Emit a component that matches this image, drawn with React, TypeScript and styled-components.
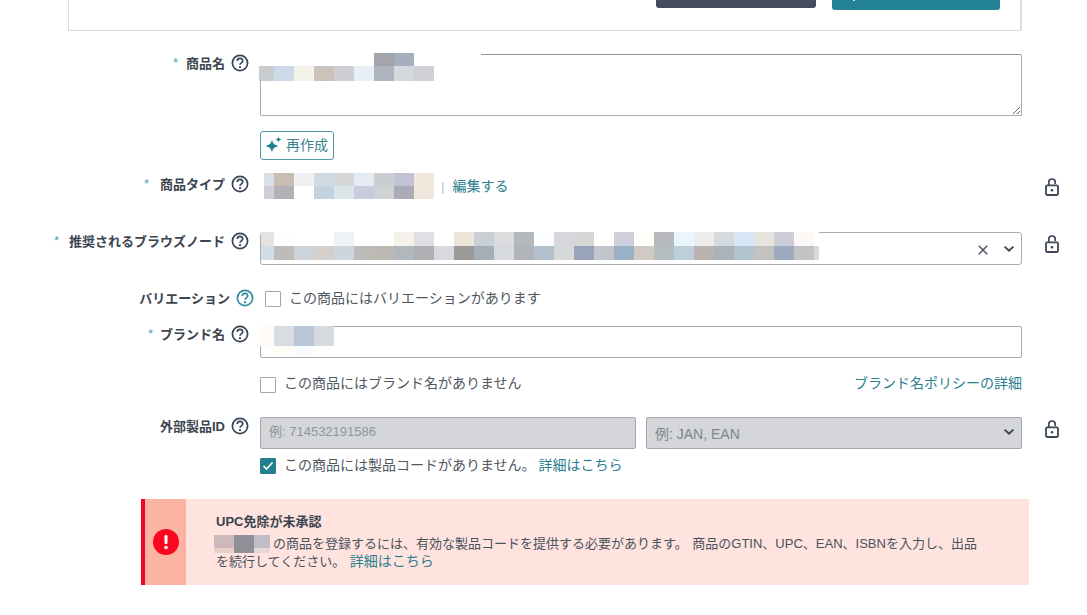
import React from "react";
import styled, { createGlobalStyle } from "styled-components";

const Global = createGlobalStyle`
  html, body { margin: 0; padding: 0; background: #fff; }
  body { font-family: "Liberation Sans", "Noto Sans CJK JP", sans-serif; color: #4a525c; }
`;

const Page = styled.div`
  width: 1087px;
  height: 615px;
  overflow: hidden;
`;

const TopCard = styled.div`
  margin-left: 68px;
  width: 954px;
  height: 31px;
  box-sizing: border-box;
  border: 1px solid #dcdddf;
  border-top: none;
  border-right-width: 2px;
  padding-right: 20px;
  display: flex;
  justify-content: flex-end;
  align-items: flex-start;
  gap: 16px;
`;

const TopButton = styled.div<{ $bg: string; $w: number; $h: number }>`
  width: ${(p) => p.$w}px;
  height: ${(p) => p.$h}px;
  background: ${(p) => p.$bg};
  border-radius: 0 0 3px 3px;
  overflow: hidden;
`;

const ButtonGlyph = styled.span`
  display: block;
  width: 2px;
  height: 1px;
  margin-left: 21px;
  background: #d5e6ea;
`;

const Row = styled.div<{ $mt: number; $shift?: number }>`
  display: grid;
  grid-template-columns: ${(p) => 260 + (p.$shift ?? 0)}px ${(p) => 762 - (p.$shift ?? 0)}px 65px;
  margin-top: ${(p) => p.$mt}px;
`;

const LabelCell = styled.div<{ $top?: number }>`
  display: flex;
  justify-content: flex-end;
  align-items: center;
  height: 18px;
  margin-top: ${(p) => p.$top ?? 0}px;
  padding-right: 11px;
`;

const Asterisk = styled.span<{ $gap: number }>`
  color: #3fa6b6;
  font-size: 13px;
  font-weight: 400;
  margin-right: ${(p) => p.$gap}px;
  margin-top: -2px;
`;

const LabelText = styled.span`
  font-size: 13px;
  line-height: 18px;
  font-weight: 700;
  color: #3b444f;
  margin: 2px 6px 0 0;
  white-space: nowrap;
`;

const Field = styled.div`
  position: relative;
`;

const Mosaic = styled.svg<{ $left?: number; $top?: number }>`
  display: block;
  shape-rendering: crispEdges;
  ${(p) =>
    p.$left !== undefined
      ? `position: absolute; left: ${p.$left}px; top: ${p.$top}px;`
      : ""}
`;

const InlineMosaic = styled.svg`
  display: inline-block;
  shape-rendering: crispEdges;
  vertical-align: -5px;
  margin-left: -2px;
  margin-right: 3px;
`;

const TitleArea = styled.textarea`
  display: block;
  width: 100%;
  height: 62px;
  box-sizing: border-box;
  border: 1px solid #a9adb2;
  border-top-color: #8a949c;
  border-radius: 2px;
  background: #fff;
  margin: 0;
  padding: 0;
  outline: none;
`;

const Regen = styled.button`
  margin: 15px 0 0 0;
  width: 74px;
  height: 29px;
  box-sizing: border-box;
  display: flex;
  align-items: center;
  gap: 2px;
  padding: 0 0 2px 3px;
  background: #fff;
  border: 1px solid #4f98a8;
  border-radius: 3px;
  color: #3b8592;
  font-family: inherit;
  font-size: 14px;
  line-height: 18px;
`;

const TypeLine = styled.div`
  display: flex;
  align-items: center;
  height: 26px;
  padding-left: 4px;
  font-size: 14px;
`;

const Sep = styled.span`
  color: #b6c2d2;
  font-size: 13px;
  margin: 0 8px 0 7px;
`;

const Link = styled.a`
  color: #2b8090;
  font-size: 14px;
  line-height: 20px;
  text-decoration: none;
  white-space: nowrap;
`;

const TightLink = styled(Link)`
  margin-left: -5px;
`;

const AlertLink = styled.a`
  color: #2b8090;
  font-size: 14px;
  line-height: 17px;
  text-decoration: none;
`;

const Combo = styled.div`
  height: 33px;
  box-sizing: border-box;
  border: 1px solid #a9adb2;
  border-radius: 3px;
  background: #fff;
  display: flex;
  align-items: center;
  justify-content: flex-end;
  gap: 14px;
  padding: 2px 6px 0 0;
`;

const CheckRow = styled.div`
  display: flex;
  align-items: center;
  gap: 8px;
  height: 20px;
  font-size: 14px;
  line-height: 20px;
  color: #4f5761;
  white-space: nowrap;
`;

const Box = styled.span<{ $checked?: boolean; $y?: number }>`
  width: 16px;
  height: 16px;
  box-sizing: border-box;
  border: 1px solid ${(p) => (p.$checked ? "#24808f" : "#a3a7ad")};
  border-radius: 1px;
  background: ${(p) => (p.$checked ? "#24808f" : "#fff")};
  display: flex;
  align-items: center;
  justify-content: center;
  position: relative;
  top: ${(p) => p.$y ?? 2}px;
`;

const BrandInput = styled.input`
  display: block;
  width: 100%;
  height: 32px;
  box-sizing: border-box;
  border: 1px solid #a9adb2;
  border-radius: 2px;
  background: #fff;
  margin: 0;
  padding: 0;
  outline: none;
`;

const SplitLine = styled.div`
  display: flex;
  justify-content: space-between;
  align-items: center;
  height: 20px;
`;

const IdFields = styled.div`
  display: grid;
  grid-template-columns: 376px 376px;
  gap: 10px;
`;

const DisabledInput = styled.input`
  display: block;
  width: 100%;
  height: 32px;
  box-sizing: border-box;
  border: 1px solid #a3a7ac;
  border-radius: 2px;
  background: #d4d6d9;
  margin: 0;
  padding: 0 8px 3px;
  outline: none;
  font-family: "Liberation Sans", "Noto Sans CJK JP", sans-serif;
  font-size: 13px;
  &::placeholder { color: #90969c; opacity: 1; }
`;

const DisabledSelect = styled.div`
  height: 32px;
  box-sizing: border-box;
  border: 1px solid #a3a7ac;
  border-radius: 2px;
  background: #d4d6d9;
  display: flex;
  align-items: center;
  justify-content: space-between;
  padding: 0 6px 1px 8px;
  font-family: "Liberation Sans", "Noto Sans CJK JP", sans-serif;
  font-size: 14px;
  color: #7e858c;
`;

const LockSlot = styled.div<{ $top: number }>`
  padding-left: 23px;
  margin-top: ${(p) => p.$top}px;
`;

const Alert = styled.div`
  margin: 24px 0 0 141px;
  width: 888px;
  height: 86px;
  display: flex;
  background: #fee3de;
  border-left: 4px solid #f5052b;
  box-sizing: border-box;
`;

const AlertSide = styled.div`
  width: 41px;
  background: #fbb4a2;
  display: flex;
  align-items: center;
  justify-content: center;
  flex: none;
`;

const AlertBody = styled.div`
  padding: 13px 0 0 30px;
`;

const AlertTitle = styled.div`
  font-size: 13px;
  line-height: 20px;
  font-weight: 700;
  color: #3b444f;
`;

const AlertText = styled.div`
  font-size: 13px;
  line-height: 17px;
  margin-top: 3px;
  color: #4a525c;
  white-space: nowrap;
  word-spacing: 1px;
`;

type Cell = [number, string];

function MosaicRows({ rows, width, height, left, top }: { rows: { y: number; h: number; cells: Cell[]; x?: number }[]; width: number; height: number; left?: number; top?: number }) {
  return (
    <Mosaic width={width} height={height} $left={left} $top={top} aria-hidden>
      {rows.map((r, i) => {
        let x = r.x ?? 0;
        return r.cells.map(([w, c], j) => {
          const el = <rect key={`${i}-${j}`} x={x} y={r.y} width={w} height={r.h} fill={c} />;
          x += w;
          return el;
        });
      })}
    </Mosaic>
  );
}

const uniform = (first: number, colors: string[], last?: number): Cell[] =>
  colors.map((c, i) => [i === 0 ? first : i === colors.length - 1 && last ? last : 20, c]);

function Help({ teal }: { teal?: boolean }) {
  const c = teal ? "#2f8ea0" : "#3a4556";
  return (
    <svg width="18" height="18" viewBox="0 0 18 18" fill="none" style={{ flex: "none" }}>
      <circle cx="9" cy="9" r="7.6" stroke={c} strokeWidth="1.7" />
      <path d="M6.3 7a2.7 2.7 0 0 1 5.4.1c0 1.7-2.7 1.8-2.7 3.6" stroke={c} strokeWidth="1.7" />
      <circle cx="9" cy="13.2" r="1.1" fill={c} />
    </svg>
  );
}

function Lock() {
  return (
    <svg width="14" height="18" viewBox="0 0 14 18" fill="none" style={{ display: "block" }}>
      <path d="M3.8 8V4.2a3.2 3.2 0 0 1 6.4 0V6" stroke="#3d4758" strokeWidth="1.7" />
      <rect x="1" y="7.4" width="12" height="9.6" rx="1.2" stroke="#3d4758" strokeWidth="1.8" />
      <circle cx="7" cy="12.2" r="1.3" fill="#3d4758" />
    </svg>
  );
}

function Chevron() {
  return (
    <svg width="12" height="8" viewBox="0 0 12 8" fill="none" style={{ flex: "none", marginBottom: 1 }}>
      <path d="M1.6 1.6 6 5.8l4.4-4.2" stroke="#3d4758" strokeWidth="1.9" />
    </svg>
  );
}

const Req = ({ gap }: { gap: number }) => <Asterisk $gap={gap}>*</Asterisk>;

export default function App() {
  return (
    <Page>
      <Global />
      <TopCard>
        <TopButton $bg="#434c5c" $w={160} $h={8} />
        <TopButton $bg="#248296" $w={168} $h={10}>
          <ButtonGlyph />
        </TopButton>
      </TopCard>

      <Row $mt={23}>
        <LabelCell>
          <Req gap={8} />
          <LabelText>商品名</LabelText>
          <Help />
        </LabelCell>
        <Field>
          <TitleArea readOnly />
          <MosaicRows
            left={-1}
            top={-1}
            width={222}
            height={28}
            rows={[
              { y: 0, h: 13, cells: [[115, "#fff"], [20, "#a3a5ad"], [20, "#a5afbd"], [67, "#fff"]] },
              { y: 13, h: 15, cells: [[15, "#c9cdcf"], [20, "#cddaea"], [20, "#f3f3ec"], [20, "#cbc3b9"], [20, "#d0ced2"], [20, "#e6eef6"], [20, "#aeb5c0"], [20, "#d5d8dc"], [20, "#cfd0d4"], [47, "#fffffd"]] },
            ]}
          />
          <Regen>
            <svg width="20" height="20" viewBox="0 0 20 20">
              <path d="M8 4.5c.7 3.8 2.2 5.3 6.5 6.5-4.3 1.2-5.8 2.7-6.5 6.5-.7-3.8-2.2-5.3-6.5-6.5 4.3-1.2 5.8-2.7 6.5-6.5Z" fill="#1f7f8e" />
              <path d="M14.5 1.5c.4 1.9 1 2.5 3 3-2 .5-2.6 1.1-3 3-.4-1.9-1-2.5-3-3 2-.5 2.6-1.1 3-3Z" fill="#1f7f8e" />
            </svg>
            再作成
          </Regen>
        </Field>
      </Row>

      <Row $mt={13}>
        <LabelCell $top={2}>
          <Req gap={11} />
          <LabelText>商品タイプ</LabelText>
          <Help />
        </LabelCell>
        <TypeLine>
          <MosaicRows
            width={170}
            height={26}
            rows={[
              { y: 0, h: 13, cells: uniform(10, ["#d9dfe9", "#c9bcb1", "#eff0f2", "#d0dae4", "#d4d6d8", "#e4ebf3", "#cccdd0", "#c1c3d4", "#f2e7dd"]) },
              { y: 13, h: 13, cells: uniform(10, ["#d0ced4", "#b3b1b5", "#ffffff", "#c2d2e0", "#dbe5ea", "#c9ccdc", "#d0d1d4", "#aaadb8", "#f2e7dd"]) },
            ]}
          />
          <Sep>|</Sep>
          <Link>編集する</Link>
        </TypeLine>
        <LockSlot $top={5}>
          <Lock />
        </LockSlot>
      </Row>

      <Row $mt={33}>
        <LabelCell>
          <Req gap={10} />
          <LabelText>推奨されるブラウズノード</LabelText>
          <Help />
        </LabelCell>
        <Field>
          <Combo>
            <svg width="12" height="12" viewBox="0 0 12 12" fill="none">
              <path d="M1.8 1.8l8.4 8.4M10.2 1.8l-8.4 8.4" stroke="#4a5360" strokeWidth="1.5" />
            </svg>
            <Chevron />
          </Combo>
          <MosaicRows
            left={1}
            top={0}
            width={558}
            height={28}
            rows={[
              { y: 0, h: 14, cells: uniform(13, ["#e6e2e0", "#fdfdfd", "#ffffff", "#ffffff", "#eef2f6", "#ffffff", "#ffffff", "#f6f1ea", "#dfe0e3", "#ffffff", "#eee6da", "#c9d0d5", "#dcdcde", "#b4b7bc", "#fbfdfe", "#d6d7dc", "#d6d6d6", "#ffffff", "#cdcfdb", "#fefefa", "#b8b9bc", "#eaf6fd", "#ececec", "#d5dade", "#d6e6f5", "#e5e4df", "#cdced9", "#fbf8f5", "#ffffff"], 5) },
              { y: 14, h: 14, cells: uniform(13, ["#d3dde8", "#bfbbb8", "#cdd3db", "#d4cfcb", "#cdd6de", "#bcbbb8", "#bcb9b3", "#b0b7bd", "#aeafb3", "#d7d9de", "#9b9a98", "#a3afb6", "#d6dade", "#b0b3b8", "#b2c0ce", "#d7d9d9", "#99a4bc", "#c2c5ca", "#9ab0c4", "#d1c9c4", "#b6bdc1", "#bdcfda", "#bbb2b2", "#abb2b9", "#b1c3cf", "#c2c3c1", "#9eabbe", "#c2c3c5", "#d8d9dd"], 5) },
            ]}
          />
        </Field>
        <LockSlot $top={3}>
          <Lock />
        </LockSlot>
      </Row>

      <Row $mt={23} $shift={5}>
        <LabelCell $top={1}>
          <LabelText>バリエーション</LabelText>
          <Help teal />
        </LabelCell>
        <CheckRow>
          <Box $y={1} />
          この商品にはバリエーションがあります
        </CheckRow>
      </Row>

      <Row $mt={18}>
        <LabelCell $top={-1}>
          <Req gap={7} />
          <LabelText>ブランド名</LabelText>
          <Help />
        </LabelCell>
        <Field>
          <BrandInput readOnly />
          <MosaicRows
            left={-1}
            top={0}
            width={75}
            height={31}
            rows={[
              { y: 0, h: 20, cells: [[15, "#fefbf6"], [20, "#d9dde1"], [20, "#b9c6d8"], [20, "#d6d9dd"]] },
              { y: 20, h: 11, x: 15, cells: [[20, "#fefdf8"], [20, "#f8fcfe"]] },
            ]}
          />
        </Field>
      </Row>

      <Row $mt={15}>
        <div />
        <SplitLine>
          <CheckRow>
            <Box />
            この商品にはブランド名がありません
          </CheckRow>
          <Link>ブランド名ポリシーの詳細</Link>
        </SplitLine>
      </Row>

      <Row $mt={24}>
        <LabelCell>
          <LabelText>外部製品ID</LabelText>
          <Help />
        </LabelCell>
        <IdFields>
          <DisabledInput disabled placeholder="例: 714532191586" />
          <DisabledSelect>
            例: JAN, EAN
            <Chevron />
          </DisabledSelect>
        </IdFields>
        <LockSlot $top={3}>
          <Lock />
        </LockSlot>
      </Row>

      <Row $mt={6}>
        <div />
        <CheckRow>
          <Box $checked $y={1}>
            <svg width="12" height="10" viewBox="0 0 12 10" fill="none">
              <path d="M1.5 5l3 3 6-6.5" stroke="#fff" strokeWidth="1.6" />
            </svg>
          </Box>
          <span>この商品には製品コードがありません。</span>
          <TightLink>詳細はこちら</TightLink>
        </CheckRow>
      </Row>

      <Alert>
        <AlertSide>
          <svg width="26" height="26" viewBox="0 0 26 26">
            <circle cx="13" cy="13" r="13" fill="#f9061f" />
            <rect x="11.5" y="6" width="3" height="9" rx="1.2" fill="#fff" />
            <circle cx="13" cy="18.5" r="1.8" fill="#fff" />
          </svg>
        </AlertSide>
        <AlertBody>
          <AlertTitle>UPC免除が未承認</AlertTitle>
          <AlertText>
            <InlineMosaic width={56} height={18} aria-hidden>
              <rect x="0" y="0" width="20" height="13" fill="#cdb8ba" />
              <rect x="20" y="0" width="20" height="18" fill="#908e96" />
              <rect x="40" y="0" width="16" height="13" fill="#c2bcc8" />
              <rect x="0" y="13" width="20" height="5" fill="#e8cfc8" />
              <rect x="40" y="13" width="16" height="5" fill="#e8d8d4" />
            </InlineMosaic>
            の商品を登録するには、有効な製品コードを提供する必要があります。 商品のGTIN、UPC、EAN、ISBNを入力し、出品
            <br />
            を続行してください。 <AlertLink>詳細はこちら</AlertLink>
          </AlertText>
        </AlertBody>
      </Alert>
    </Page>
  );
}
